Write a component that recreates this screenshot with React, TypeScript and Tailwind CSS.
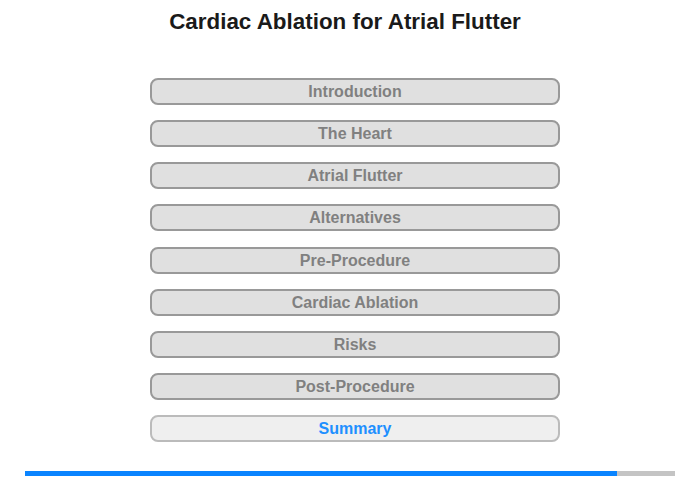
import React from "react"

const items = [
  "Introduction",
  "The Heart",
  "Atrial Flutter",
  "Alternatives",
  "Pre-Procedure",
  "Cardiac Ablation",
  "Risks",
  "Post-Procedure",
  "Summary",
]

export default function App() {
  const active = "Summary"
  return (
    <div className="w-[700px] h-[480px] bg-white relative font-['Liberation_Sans',Arial,sans-serif]">
      <h1 className="pt-[9px] pr-[10px] text-center text-[22.4px] leading-[26px] font-bold text-[#1a1a1a]">
        Cardiac Ablation for Atrial Flutter
      </h1>
      <div className="mt-[43px] ml-[150px] w-[410px] flex flex-col gap-[15.125px]">
        {items.map((label) => {
          const isActive = label === active
          return (
            <button
              key={label}
              className={
                isActive
                  ? "h-[27px] w-full rounded-[8px] border-2 border-[#bbbbbb] bg-[#efefef] text-[16px] leading-[23px] font-bold text-[#1e90ff]"
                  : "h-[27px] w-full rounded-[8px] border-2 border-[#999999] bg-[#e0e0e0] text-[16px] leading-[23px] font-bold text-[#808080]"
              }
            >
              {label}
            </button>
          )
        })}
      </div>
      <div className="absolute left-[25px] top-[471px] w-[650px] h-[5px] bg-[#c4c4c4]">
        <div className="h-full bg-[#0a84ff]" style={{ width: "592px" }} />
      </div>
    </div>
  )
}
